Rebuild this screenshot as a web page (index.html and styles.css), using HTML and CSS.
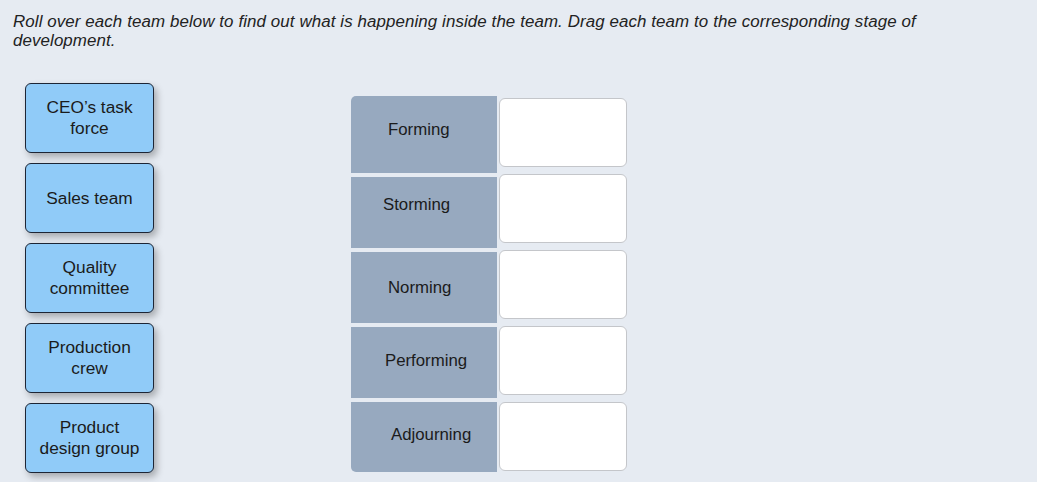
FILE: index.html
```html
<!DOCTYPE html>
<html>
<head>
<meta charset="utf-8">
<link rel="stylesheet" href="styles.css">
</head>
<body>
<p class="instructions">Roll over each team below to find out what is happening inside the team. Drag each team to the corresponding stage of development.</p>
<div class="board">
  <div class="teams">
    <div class="team">CEO’s task<br>force</div>
    <div class="team">Sales team</div>
    <div class="team">Quality<br>committee</div>
    <div class="team">Production<br>crew</div>
    <div class="team">Product<br>design group</div>
  </div>
  <div class="stages">
    <div class="labels">
      <div class="stage stage-forming">Forming</div>
      <div class="stage stage-storming">Storming</div>
      <div class="stage stage-norming">Norming</div>
      <div class="stage stage-performing">Performing</div>
      <div class="stage stage-adjourning">Adjourning</div>
    </div>
    <div class="drops">
      <div class="drop"></div>
      <div class="drop"></div>
      <div class="drop"></div>
      <div class="drop"></div>
      <div class="drop"></div>
    </div>
  </div>
</div>
</body>
</html>
```
FILE: styles.css
```css
html, body {
  margin: 0;
  padding: 0;
  background: #e6ebf2;
  height: 100%;
  overflow: hidden;
}
body {
  font-family: "Liberation Sans", Arial, sans-serif;
  color: #1b1b1b;
}
.instructions {
  margin: 0;
  padding: 12px 0 0 13px;
  width: 920px;
  font-style: italic;
  font-size: 16.9px;
  line-height: 19px;
  letter-spacing: 0.1px;
  color: #222;
}
.board {
  display: flex;
  align-items: flex-start;
  padding-left: 25px;
  margin-top: 33px;
}
.teams {
  display: flex;
  flex-direction: column;
  gap: 10px;
  width: 129px;
}
.team {
  box-sizing: border-box;
  height: 70px;
  border: 1px solid #1d2535;
  border-radius: 6px;
  background: #90cbf8;
  box-shadow: 3px 4px 7px rgba(0, 0, 0, 0.28);
  display: flex;
  align-items: center;
  justify-content: center;
  text-align: center;
  font-size: 17.3px;
  line-height: 21px;
}
.stages {
  display: flex;
  margin-left: 197px;
  margin-top: 13px;
  gap: 2px;
}
.labels {
  display: flex;
  flex-direction: column;
  gap: 4px;
  width: 146px;
}
.stage {
  background: #97a9bf;
  height: 71px;
  display: flex;
  align-items: center;
  font-size: 16.8px;
  box-sizing: border-box;
}
.stage-forming { height: 77px; padding: 0 0 9px 37px; border-top-left-radius: 5px; }
.stage-storming { padding: 0 0 15px 32px; }
.stage-norming { padding: 0 0 0 37px; }
.stage-performing { padding: 0 0 3px 34px; }
.stage-adjourning { height: 70px; padding: 0 0 4px 40px; border-bottom-left-radius: 5px; }
.drops {
  display: flex;
  flex-direction: column;
  gap: 7px;
  margin-top: 2px;
  width: 128px;
}
.drop {
  box-sizing: border-box;
  height: 69px;
  background: #fff;
  border: 1px solid #c4c6ca;
  border-radius: 6px;
}
```
